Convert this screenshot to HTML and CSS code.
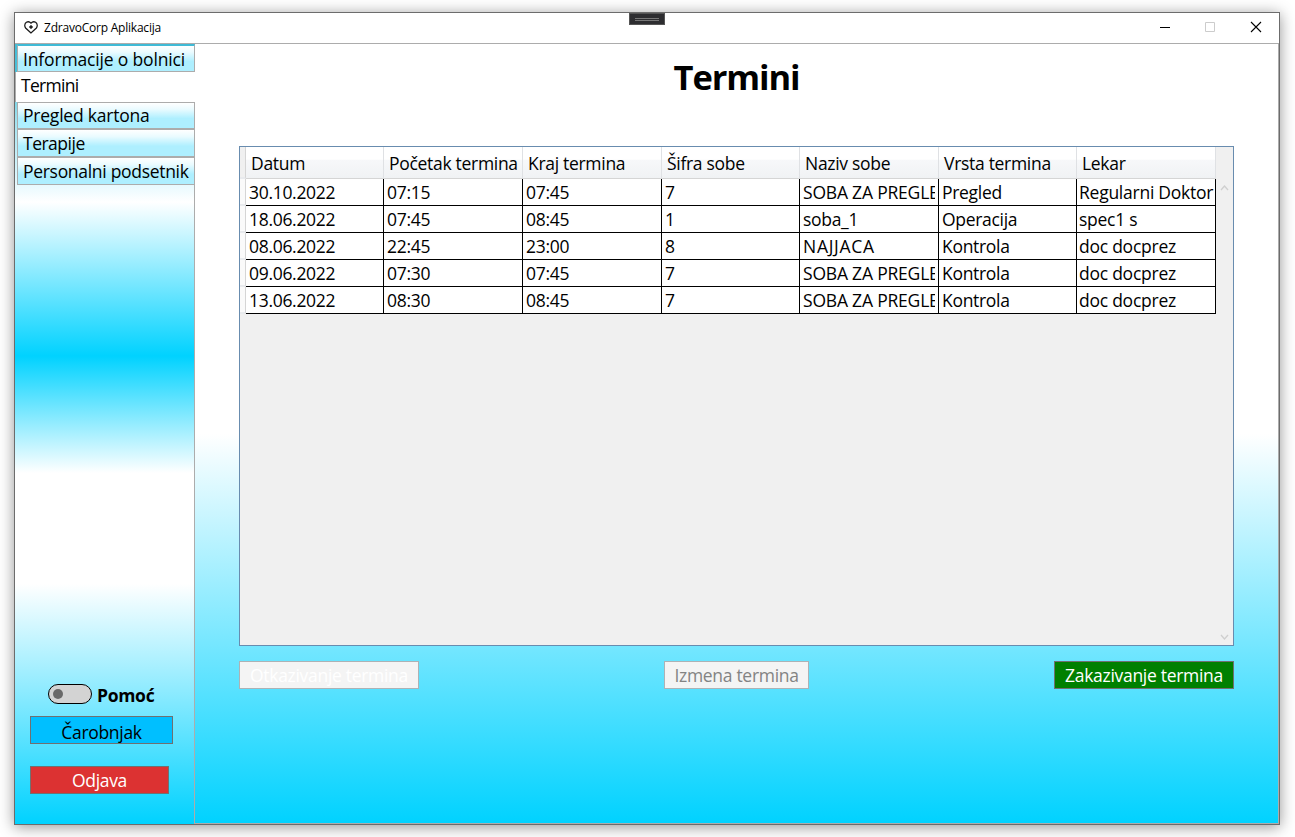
FILE: index.html
```html
<!DOCTYPE html>
<html lang="sr-Latn">
<head>
<meta charset="utf-8">
<title>ZdravoCorp Aplikacija</title>
<link rel="stylesheet" href="styles.css">
</head>
<body>
<div class="window">
  <header class="titlebar">
    <svg class="logo" viewBox="0 0 14 13" width="14" height="13"><path d="M7 12 L1.600 7 C.3 5.300 .5 2.600 2.400 1.300 C4 .4 5.800 .8 7 2.200 C8.200 .8 10 .4 11.600 1.300 C13.500 2.600 13.700 5.300 12.400 7 Z" fill="none" stroke="#1a1a1a" stroke-width="1.250"/><path d="M7 4.200v3.600M5.200 6h3.600" stroke="#1a1a1a" stroke-width="1.600"/></svg>
    <span class="app-name">ZdravoCorp Aplikacija</span>
    <div class="grip"><i></i><i></i></div>
    <svg class="controls" width="104" height="12" viewBox="0 0 104 12"><path d="M0 6.500h10" stroke="#000"/><path d="M45.500 1.500h9v9h-9z" fill="none" stroke="#ccc"/><path d="M91 1l10 10M101 1l-10 10" stroke="#000" stroke-width="1.100"/></svg>
  </header>
  <div class="body">
    <aside class="sidebar">
      <nav class="tabs">
        <a class="tab first">Informacije o bolnici</a>
        <a class="tab selected">Termini</a>
        <a class="tab third">Pregled kartona</a>
        <a class="tab fourth">Terapije</a>
        <a class="tab">Personalni podsetnik</a>
      </nav>
      <div class="tools">
        <div class="help"><span class="toggle"></span><b>Pomoć</b></div>
        <button class="btn wizard">Čarobnjak</button>
        <button class="btn logout">Odjava</button>
      </div>
    </aside>
    <main class="content">
      <h1>Termini</h1>
      <div class="grid">
        <div class="row head"><i></i><span>Datum</span><span>Početak termina</span><span>Kraj termina</span><span>Šifra sobe</span><span>Naziv sobe</span><span>Vrsta termina</span><span>Lekar</span></div>
        <div class="row"><i></i><span>30.10.2022</span><span>07:15</span><span>07:45</span><span>7</span><span><em>SOBA ZA PREGLE</em></span><span>Pregled</span><span class="doctor">Regularni Doktor</span></div>
        <div class="row"><i></i><span>18.06.2022</span><span>07:45</span><span>08:45</span><span>1</span><span>soba_1</span><span>Operacija</span><span class="doctor">spec1 s</span></div>
        <div class="row"><i></i><span>08.06.2022</span><span>22:45</span><span>23:00</span><span>8</span><span class="caps">NAJJACA</span><span>Kontrola</span><span class="doctor">doc docprez</span></div>
        <div class="row"><i></i><span>09.06.2022</span><span>07:30</span><span>07:45</span><span>7</span><span><em>SOBA ZA PREGLE</em></span><span>Kontrola</span><span class="doctor">doc docprez</span></div>
        <div class="row"><i></i><span>13.06.2022</span><span>08:30</span><span>08:45</span><span>7</span><span><em>SOBA ZA PREGLE</em></span><span>Kontrola</span><span class="doctor">doc docprez</span></div>
        <svg class="scroll up" width="9" height="6" viewBox="0 0 9 6"><path d="M1 5l3.500-4L8 5" fill="none" stroke="#cfcfcf" stroke-width="1.300"/></svg>
        <svg class="scroll down" width="9" height="6" viewBox="0 0 9 6"><path d="M1 1l3.500 4L8 1" fill="none" stroke="#cfcfcf" stroke-width="1.300"/></svg>
      </div>
      <div class="actions">
        <button class="btn cancel" disabled>Otkazivanje termina</button>
        <button class="btn edit" disabled>Izmena termina</button>
        <button class="btn book">Zakazivanje termina</button>
      </div>
    </main>
  </div>
</div>
</body>
</html>
```

FILE: styles.css
```css
* { box-sizing: border-box; }
body { margin: 0; width: 1295px; height: 837px; overflow: hidden; padding: 12px 0 0 14px; background: #fff; font-family: "Open Sans", "Noto Sans", sans-serif; font-size: 17.5px; letter-spacing: -0.3px; color: #000; }
.window { width: 1266px; height: 813px; border: 1px solid #6c6c6c; display: flex; flex-direction: column; box-shadow: 0 2px 14px rgba(0,0,0,.42); background: #fff; }
.titlebar { position: relative; height: 31px; flex: none; display: flex; align-items: center; padding: 0 15px 2px 9px; border-bottom: 1px solid #acacac; }
.app-name { font-size: 12px; letter-spacing: -0.22px; margin-left: 6px; }
.controls { margin-left: auto; }
.grip { position: absolute; left: 614px; top: 0; width: 36px; height: 12px; background: #2d2d30; border: 1px solid #555; padding: 4px 5px; display: flex; flex-direction: column; gap: 1px; }
.grip i { height: 1px; background: #777; }
.body { flex: 1; display: flex; min-height: 0; }
.sidebar { width: 180px; border-right: 1px solid #acacac; display: flex; flex-direction: column; justify-content: space-between; background: linear-gradient(#44bdd8 0, #4abfd7 28px, #a0e2ef 75px, #d8f6fd 130px, #fff 158px, #00d2ff 312px, #fff 429px, #fff 540px, #00d2ff 780px); }
.tabs { display: flex; flex-direction: column; margin-right: -1px; }
.tab { height: 28px; margin-left: 2px; padding-left: 5px; border: 1px solid #acacac; line-height: 27px; white-space: nowrap; background: linear-gradient(#fff 0, #eafbff 25%, #aeefff 62%, #aeefff); }
.tab.first { border-top: 2px solid #3fbad6; letter-spacing: -0.16px; }
.tab.selected { height: 30px; margin-left: 0; padding-left: 5px; background: #fff; border-width: 0 0 0 1px; line-height: 27px; letter-spacing: -0.7px; }
.tab.third { height: 27px; line-height: 24px; letter-spacing: -0.22px; }
.tab.fourth { letter-spacing: -0.5px; }
.tools { padding: 0 0 30px 15px; display: flex; flex-direction: column; align-items: flex-start; }
.help { display: flex; align-items: center; height: 24px; margin: 0 0 9px 18px; gap: 5px; }
.toggle { width: 44px; height: 20px; margin-top: -3px; border: 1px solid #000; border-radius: 10px; background: #d3d3d3; padding: 4px; }
.toggle::before { content: ""; display: block; width: 10px; height: 10px; border-radius: 50%; background: #696969; }
.btn { height: 28px; padding: 0; border: 1px solid #707070; font: inherit; letter-spacing: inherit; line-height: 26px; text-align: center; white-space: nowrap; }
.wizard { width: 143px; background: #00bfff; margin-bottom: 22px; padding-top: 2px; }
.logout { width: 139px; background: #dc3232; color: #fff; }
.content { flex: 1; min-width: 0; padding: 0 44px; border: solid #acacac; border-width: 0 1px 1px 0; background: linear-gradient(#fff 0, #fff 390px, #00d2ff 780px); }
h1 { margin: 0; height: 102px; padding-top: 9px; font-size: 34.5px; line-height: 48px; letter-spacing: -1.1px; text-align: center; font-weight: 700; }
.grid { position: relative; width: 995px; height: 500px; border: 1px solid #688caf; background: #f0f0f0; }
.row { width: 976px; height: 27px; display: grid; grid-template-columns: 6px 138px 139px 139px 138px 139px 138px 139px; line-height: 27px; }
.row i { background: #fafafa; border-right: 1px solid #d5d5d5; border-bottom: 2px solid #e8eaed; }
.row span { min-width: 0; overflow: hidden; white-space: nowrap; background: #fff; border-right: 1px solid #000; border-bottom: 1px solid #000; padding: 0 0 0 3px; }
.row em { display: block; width: 132px; overflow: hidden; font-style: normal; letter-spacing: -0.2px; }
.row .caps { letter-spacing: 0.7px; }
.row .doctor { padding-left: 2px; letter-spacing: -0.25px; }
.row.head { height: 32px; line-height: 33px; }
.head i { background: #f0f0f0; }
.row.head span { padding-left: 5px; background: linear-gradient(#fff 0, #fff 40%, #f7f8fa 41%, #f0f2f4 100%); border-right: 1px solid #dfe1e4; border-bottom: 1px solid #d5d5d5; }
.scroll { position: absolute; left: 980px; }
.up { top: 38px; }
.down { bottom: 5px; }
.actions { display: grid; grid-template-columns: 180px 145px 180px; justify-content: space-between; margin-top: 15px; width: 995px; }
.cancel, .edit { background: #f4f4f4; border-color: #adb2b5; color: #fff; }
.edit { color: #838383; }
.book { background: #008000; color: #fff; }
```
